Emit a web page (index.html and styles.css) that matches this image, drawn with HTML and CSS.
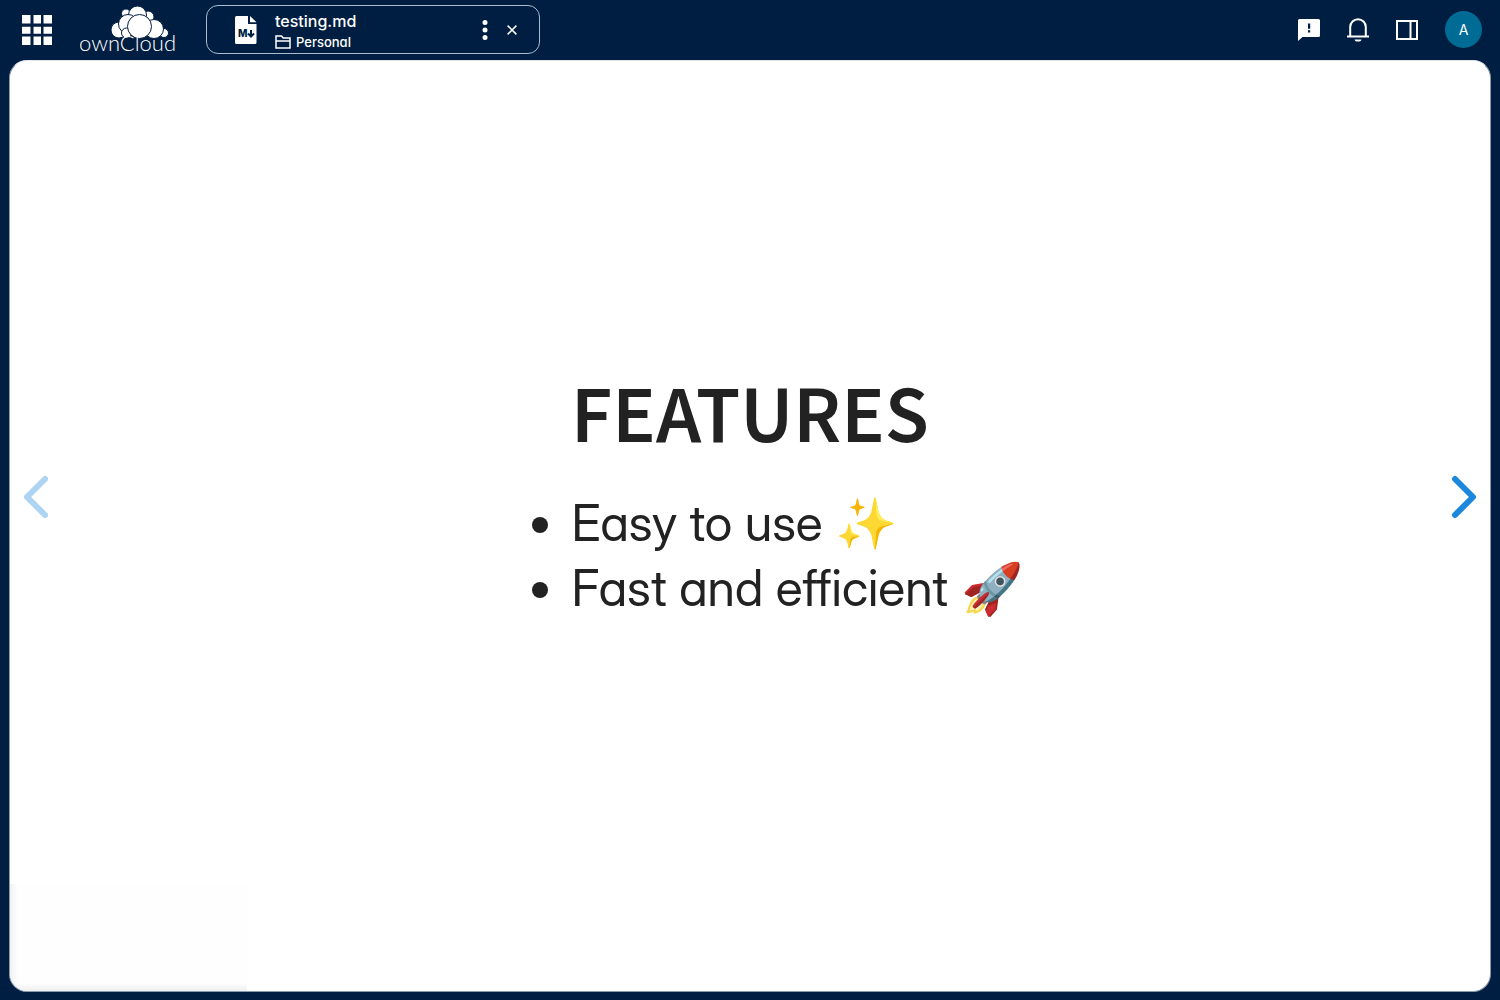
FILE: index.html
```html
<!DOCTYPE html>
<html lang="en">
<head>
<meta charset="utf-8">
<meta name="viewport" content="width=device-width, initial-scale=1">
<title>testing.md - Personal - ownCloud</title>
<link rel="stylesheet" href="styles.css">
</head>
<body>
<header class="topbar">
  <button class="icon-btn apps" type="button" aria-label="Application switcher">
    <svg width="30" height="30" viewBox="0 0 30 30" fill="currentColor"><path d="M0 0h8.500v8.500H0zM11.500 0H19v8.500h-7.500zM21.500 0H30v8.500h-8.500zM0 11.800h8.500v7H0zM11.500 11.800H19v7h-7.500zM21.500 11.800H30v7h-8.500zM0 21.500h8.500V30H0zM11.500 21.500H19V30h-7.500zM21.500 21.500H30V30h-8.500z"/></svg>
  </button>
  <a class="logo" href="#" aria-label="ownCloud">
    <svg width="96" height="50" viewBox="0 0 96 50">
      <g fill="#fff" stroke="#001e41" stroke-width="1">
        <circle cx="46" cy="8.500" r="4.500"/>
        <circle cx="68" cy="12" r="6"/>
        <circle cx="57.500" cy="10" r="9"/>
        <circle cx="39" cy="25" r="8"/>
        <circle cx="48" cy="19" r="9.500"/>
        <circle cx="84" cy="28" r="4.500"/>
        <circle cx="74" cy="24" r="9.500"/>
        <circle cx="46.500" cy="28" r="5"/>
        <circle cx="59.500" cy="21.500" r="12"/>
      </g>
      <text class="wordmark" x="-1" y="46">ownCloud</text>
    </svg>
  </a>
  <div class="file-tab">
    <svg class="file-icon" width="22" height="28" viewBox="0 0 22 28">
      <path fill="#fff" d="M1.500 0H13v8h8.500v18.500q0 1.500-1.500 1.500H1.500Q0 28 0 26.500v-25Q0 0 1.500 0zM15 0l6.500 6.200H15z"/>
      <text class="md-mark" x="3" y="21">M</text>
      <path fill="none" stroke="#001e41" stroke-width="2" d="M16 14v6M13 17.500l3 3 3-3"/>
    </svg>
    <div class="file-text">
      <span class="file-name">testing.md</span>
      <a class="file-place" href="#">
        <svg width="17" height="14" viewBox="0 0 17 14" fill="none" stroke="currentColor" stroke-width="1.500"><path d="M1 13V1h5.500l1.700 2H15v10zM1 6h14"/></svg>
        <span>Personal</span>
      </a>
    </div>
    <button class="icon-btn more" type="button" aria-label="Show context menu">
      <svg width="6" height="20" viewBox="0 0 6 20" fill="currentColor"><circle cx="3" cy="2.500" r="2.500"/><circle cx="3" cy="10" r="2.500"/><circle cx="3" cy="17.500" r="2.500"/></svg>
    </button>
    <button class="icon-btn close" type="button" aria-label="Close">
      <svg width="10" height="10" viewBox="0 0 10 10" stroke="currentColor" stroke-width="1.500"><path d="M.6.600l8.800 8.800M9.400.600L.6 9.400"/></svg>
    </button>
  </div>
  <nav class="actions" aria-label="Account">
    <button class="icon-btn" type="button" aria-label="Feedback">
      <svg width="22" height="22" viewBox="0 0 22 22"><path fill="currentColor" d="M1.500 0h19Q22 0 22 1.500v15q0 1.500-1.500 1.500H4.500L0 22V1.500Q0 0 1.500 0z"/><path fill="#001e41" d="M10 4.500h2.200v5.300H10zM10 11.300h2.200v2.200H10z"/></svg>
    </button>
    <button class="icon-btn" type="button" aria-label="Notifications">
      <svg width="22" height="24" viewBox="0 0 22 24"><path fill="none" stroke="currentColor" stroke-width="2" d="M3.200 18V9a7.800 7.800 0 0 1 15.600 0v9M0 18.500h22"/><path fill="currentColor" d="M7.500 21.500h7q-.5 2-2 2h-3q-1.500 0-2-2z"/></svg>
    </button>
    <button class="icon-btn" type="button" aria-label="Open sidebar">
      <svg width="22" height="20" viewBox="0 0 22 20" fill="none" stroke="currentColor" stroke-width="2"><path d="M1 1h20v18H1zM14.500 1v18"/></svg>
    </button>
    <button class="avatar" type="button" aria-label="My account">A</button>
  </nav>
</header>
<main class="stage">
  <button class="nav-arrow prev" type="button" aria-label="previous slide">
    <svg width="26" height="44" viewBox="0 0 26 44"><path d="M22 4L4 22l18 18"/></svg>
  </button>
  <section class="slide">
    <h1>Features</h1>
    <ul>
      <li>Easy to use ✨</li>
      <li>Fast and efficient 🚀</li>
    </ul>
  </section>
  <button class="nav-arrow next" type="button" aria-label="next slide">
    <svg width="26" height="44" viewBox="0 0 26 44"><path d="M4 4l18 18L4 40"/></svg>
  </button>
  <div class="corner-shade"></div>
</main>
</body>
</html>
```
FILE: styles.css
```css
* {
  box-sizing: border-box;
}

body {
  margin: 0;
  min-height: 100vh;
  display: flex;
  flex-direction: column;
  padding: 0 9px 8px;
  background: #001e41;
  color: #fff;
  font-family: Inter, "Liberation Sans", sans-serif;
  font-feature-settings: "cv11";
}

svg {
  display: block;
}

button {
  padding: 0;
  border: 0;
  background: none;
  color: inherit;
  font: inherit;
  cursor: pointer;
}

a {
  color: inherit;
  text-decoration: none;
}

.topbar {
  display: flex;
  align-items: center;
  height: 60px;
  padding: 0 9px 1px 13px;
}

.apps {
  padding-top: 1px;
}

.logo {
  margin: 0 30px 0 28px;
  padding-top: 1px;
}

.wordmark {
  fill: #fff;
  font: 300 22px Lato, sans-serif;
}

.file-tab {
  display: flex;
  align-items: center;
  width: 334px;
  height: 49px;
  padding: 0 22px 0 28px;
  border: 1px solid #a9bcd2;
  border-radius: 12px;
}

.md-mark {
  fill: #001e41;
  font: 800 10px Inter, sans-serif;
}

.file-text {
  flex: 1;
  padding: 2px 0 0 18px;
}

.file-name {
  display: block;
  font-size: 16px;
  font-weight: 500;
  line-height: 22px;
}

.file-place {
  display: flex;
  align-items: center;
  gap: 4px;
  font-size: 13px;
  font-weight: 500;
  line-height: 20px;
}

.more {
  margin-right: 19px;
}

.actions {
  display: flex;
  align-items: center;
  gap: 27px;
  margin-left: auto;
}

.avatar {
  width: 37px;
  height: 37px;
  border-radius: 50%;
  background: #006b95;
  font-size: 14px;
}

.stage {
  position: relative;
  flex: 1;
  display: flex;
  align-items: center;
  justify-content: space-between;
  padding: 0 13px 58px;
  overflow: hidden;
  border: 1px solid #8a99ac;
  border-top-color: #e3e7ec;
  border-radius: 18px;
  background: #fff;
  color: #222;
}

.slide {
  text-align: center;
}

.slide h1 {
  margin: 0 0 30px;
  font: 600 81px/88px "Source Sans Pro", "Source Sans 3", "Noto Sans CJK SC", sans-serif;
  text-transform: uppercase;
}

.slide ul {
  display: inline-block;
  margin: 0 0 0 54px;
  padding-left: 40px;
  text-align: left;
  vertical-align: top;
  font-family: "Inter Display", Inter, sans-serif;
  font-size: 50px;
  line-height: 65px;
}

.nav-arrow path {
  fill: none;
  stroke: #1b87dd;
  stroke-width: 6;
  stroke-linecap: round;
  stroke-linejoin: round;
}

.prev {
  opacity: 0.35;
}

.corner-shade {
  position: absolute;
  left: 0;
  bottom: 0;
  width: 237px;
  height: 107px;
  background:
    linear-gradient(to right, rgba(0, 0, 0, 0.05), transparent 8px),
    linear-gradient(to top, rgba(0, 0, 0, 0.06), transparent 8px),
    #fefefe;
}
```
